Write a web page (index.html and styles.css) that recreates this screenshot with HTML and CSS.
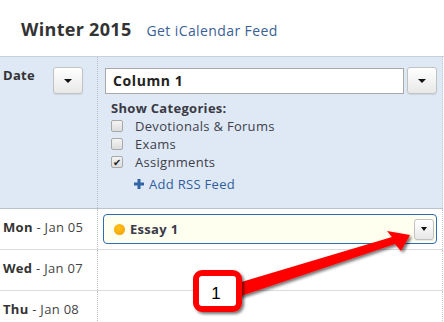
FILE: index.html
```html
<!DOCTYPE html>
<html lang="en">
<head>
    <meta charset="UTF-8">
    <title>Winter 2015</title>

    <link rel="stylesheet" href="styles.css">

</head>
<body>
<div class="page">
    <header class="term-head">
        <h1>Winter 2015</h1>
        <a class="feed-link" href="#">Get iCalendar Feed</a>
    </header>

    <div class="cal">
        <div class="row head-row">
            <div class="date-cell">
                <span class="date-label">Date</span>
                <button class="drop big"><span class="caret"></span></button>
            </div>
            <div class="col-cell">
                <div class="col-select">
                    <input type="text" class="col-name" value="Column 1">
                    <button class="drop big"><span class="caret"></span></button>
                </div>
                <div class="cats">
                    <div class="cats-title">Show Categories:</div>
                    <div class="cat"><span class="box"></span>Devotionals &amp; Forums</div>
                    <div class="cat"><span class="box"></span>Exams</div>
                    <div class="cat"><span class="box checked">&#10004;</span>Assignments</div>
                    <a class="add-rss" href="#">
                        <svg class="plus" width="10" height="10" viewBox="0 0 10 10">
                            <rect x="3.5" y="0" width="3" height="10" fill="#2f64a8"/>
                            <rect x="0" y="3.5" width="10" height="3" fill="#2f64a8"/>
                        </svg>Add RSS Feed</a>
                </div>
            </div>
        </div>

        <div class="row day-row">
            <div class="date-cell"><b>Mon</b> - Jan 05</div>
            <div class="col-cell">
                <div class="item">
                    <span class="dot"></span>
                    <span class="item-name">Essay 1</span>
                    <button class="drop small"><span class="caret"></span></button>
                </div>
            </div>
        </div>
        <div class="row day-row">
            <div class="date-cell"><b>Wed</b> - Jan 07</div>
            <div class="col-cell"></div>
        </div>
        <div class="row day-row">
            <div class="date-cell"><b>Thu</b> - Jan 08</div>
            <div class="col-cell"></div>
        </div>
    </div>

    <!-- annotation drawn over the screenshot -->
    <svg class="callout" width="444" height="322" viewBox="0 0 444 322">
        <defs>
            <filter id="shade" x="-20%" y="-20%" width="140%" height="140%">
                <feDropShadow dx="2" dy="2" stdDeviation="1.5" flood-color="#000" flood-opacity="0.55"/>
            </filter>
        </defs>
        <polygon points="238,283 392,237 387,231 410,235 401,251 395,244 238,297" fill="#ff0000" filter="url(#shade)"/>
        <rect x="196" y="273" width="43" height="36" rx="6" ry="6" fill="#fff" stroke="#ff0000" stroke-width="6" filter="url(#shade)"/>
        <text x="216" y="299" text-anchor="middle" class="callout-num">1</text>
    </svg>
</div>
</body>
</html>
```

FILE: styles.css
```css
body {
    margin: 0;
    font-family: "Open Sans", "Liberation Sans", sans-serif;
    letter-spacing: 0.3px;
    color: #333;
    background: #fff;
}

.page {
    position: relative;
    width: 444px;
    height: 322px;
    overflow: hidden;
}

.term-head {
    box-sizing: border-box;
    height: 57px;
    padding: 17px 0 0 21px;
    border-bottom: 1px solid #c9d0da;
    display: flex;
    align-items: baseline;
}

.term-head h1 {
    margin: 0;
    font-size: 18px;
    line-height: 24px;
    font-weight: bold;
    color: #333;
}

.feed-link {
    margin-left: 15px;
    font-size: 14px;
    letter-spacing: 0.4px;
    color: #3b5f96;
    text-decoration: none;
}

.cal {
    width: 443px;
}

.row {
    display: grid;
    grid-template-columns: 98px 345px;
    box-sizing: border-box;
}

.date-cell {
    box-sizing: border-box;
    border-right: 1px dotted #b8bec6;
    padding-left: 3px;
    font-size: 13px;
    line-height: 18px;
    color: #444;
}

.date-cell b {
    color: #333;
}

.col-cell {
    box-sizing: border-box;
    border-right: 1px dotted #c4c9cf;
}

/* header row */
.head-row {
    height: 152px;
    background: #dfe9f5;
    border-bottom: 1px solid #b9c2cd;
}

.head-row .date-cell {
    display: flex;
    align-items: flex-start;
    padding-top: 9px;
}

.date-label {
    width: 50px;
    font-weight: bold;
    color: #333;
}

.head-row .date-cell .drop {
    margin-top: 1px;
}

.head-row .col-cell {
    padding: 10px 5px 0 7px;
}

.col-select {
    display: flex;
    align-items: center;
    height: 27px;
}

.col-name {
    box-sizing: border-box;
    width: 300px;
    height: 26px;
    margin: 0;
    padding: 0 7px;
    border: 1px solid #a8a8a8;
    border-radius: 0;
    background: #fff;
    font-family: inherit;
    font-size: 14px;
    font-weight: bold;
    letter-spacing: 0.6px;
    color: #222;
    outline: none;
}

.col-select .drop {
    margin-left: 3px;
    width: 29px;
}

.drop {
    box-sizing: border-box;
    display: flex;
    align-items: center;
    justify-content: center;
    padding: 0;
    border: 1px solid #c2c2c2;
    border-radius: 3px;
    background: linear-gradient(#ffffff, #e8e8e8);
    box-shadow: 0 1px 1px rgba(0, 0, 0, 0.08);
}

.drop.big {
    width: 30px;
    height: 27px;
}

.drop.small {
    width: 20px;
    height: 21px;
    margin-left: auto;
    margin-right: 2px;
}

.caret {
    width: 0;
    height: 0;
    border-left: 4px solid transparent;
    border-right: 4px solid transparent;
    border-top: 4px solid #111;
}

.drop.small .caret {
    border-left-width: 3.5px;
    border-right-width: 3.5px;
}

.cats {
    margin-top: 5px;
    padding-left: 6px;
    font-size: 13px;
    line-height: 18px;
    color: #3e3e4c;
}

.cats-title {
    font-weight: bold;
    color: #3a3a44;
}

.cat {
    display: flex;
    align-items: center;
    gap: 12px;
    height: 18px;
}

.box {
    box-sizing: border-box;
    width: 12px;
    height: 12px;
    border: 1px solid #a9a9a9;
    border-radius: 2px;
    background: linear-gradient(#f4f4f4, #dcdcdc);
    font-size: 10px;
    line-height: 10px;
    letter-spacing: 0;
    text-align: center;
    color: #222;
}

.add-rss {
    display: flex;
    align-items: center;
    gap: 5px;
    margin-top: 4px;
    padding-left: 23px;
    color: #2f5e9c;
    text-decoration: none;
}

/* day rows */
.day-row {
    height: 41px;
    border-bottom: 1px solid #dcdcdc;
}

.day-row .date-cell {
    padding-top: 9px;
}

.day-row .col-cell {
    padding: 5px 5px 0 5px;
}

.item {
    box-sizing: border-box;
    display: flex;
    align-items: center;
    height: 30px;
    padding-left: 10px;
    border: 1px solid #2e6cb4;
    border-radius: 4px;
    background: #fffff0;
}

.dot {
    width: 11px;
    height: 11px;
    border-radius: 50%;
    background: radial-gradient(circle at 40% 35%, #ffc21a, #f29a00);
}

.item-name {
    margin-left: 5px;
    font-size: 13px;
    font-weight: bold;
    color: #3a3a48;
}

/* annotation */
.callout {
    position: absolute;
    left: 0;
    top: 0;
    pointer-events: none;
}

.callout-num {
    font-family: "Liberation Sans", Arial, sans-serif;
    font-size: 17px;
    letter-spacing: 0;
    fill: #000;
}
```
